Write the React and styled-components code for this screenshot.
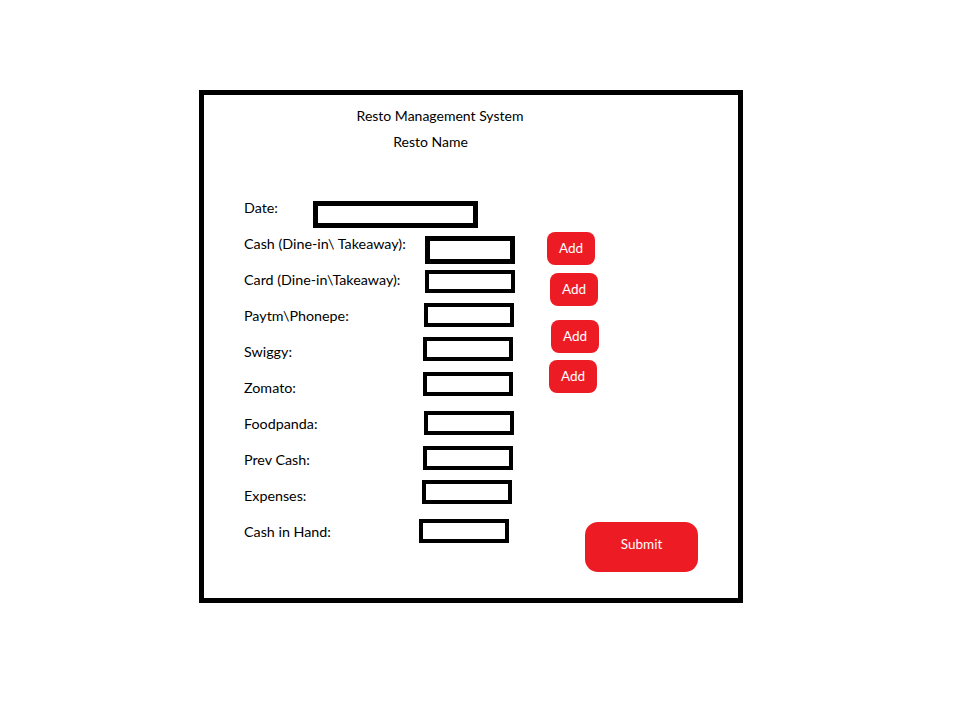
import styled, { createGlobalStyle } from "styled-components";

const GlobalStyle = createGlobalStyle`
  body {
    margin: 0;
    background: #ffffff;
    font-family: Lato, "Liberation Sans", sans-serif;
    color: #000000;
  }
`;

const Page = styled.div`
  padding: 90px 0 0 199px;
`;

const Frame = styled.div`
  box-sizing: border-box;
  width: 544px;
  height: 513px;
  border: 5px solid #000;
  display: flex;
  flex-direction: column;
`;

const Heading = styled.div`
  font-size: 14px;
  line-height: 20px;
  text-align: center;
  margin-top: ${(p) => p.$mt}px;
  padding-right: ${(p) => p.$shift}px;
`;

const Form = styled.div`
  display: flex;
  margin-top: 38px;
`;

const Fields = styled.div`
  width: 303px;
  padding-left: 40px;
  display: flex;
  flex-direction: column;
`;

const Row = styled.div`
  display: grid;
  grid-template-columns: ${(p) => p.$labelW}px auto;
  align-items: start;
  height: 36px;
`;

const Label = styled.span`
  font-size: 14.3px;
  line-height: 36px;
  white-space: nowrap;
`;

const Box = styled.div`
  box-sizing: border-box;
  width: ${(p) => p.$w || 90}px;
  height: ${(p) => p.$h}px;
  margin-top: ${(p) => p.$mt}px;
  border: ${(p) => p.$bw || 4}px solid #000;
  background: #fff;
`;

const Actions = styled.div`
  display: flex;
  flex-direction: column;
  align-items: flex-start;
`;

const RedButton = styled.button`
  box-sizing: border-box;
  width: ${(p) => (p.$big ? 113 : 48)}px;
  height: ${(p) => (p.$big ? 50 : 33)}px;
  margin-top: ${(p) => p.$mt}px;
  margin-left: ${(p) => p.$dx || 0}px;
  border: none;
  border-radius: ${(p) => (p.$big ? 13 : 8)}px;
  background: #ed1c24;
  color: #ffffff;
  font-family: Lato, "Liberation Sans", sans-serif;
  font-size: 13.5px;
  padding: 0 0 ${(p) => (p.$big ? 6 : 2)}px;
  cursor: pointer;
`;

const rows = [
  { label: "Date:", x: 313, top: 11, h: 27, w: 165, bw: 5 },
  { label: "Cash (Dine-in\\ Takeaway):", x: 425, top: 10, h: 28, bw: 5 },
  { label: "Card (Dine-in\\Takeaway):", x: 425, top: 8, h: 23 },
  { label: "Paytm\\Phonepe:", x: 424, top: 5, h: 24 },
  { label: "Swiggy:", x: 423, top: 3, h: 24 },
  { label: "Zomato:", x: 423, top: 2, h: 24 },
  { label: "Foodpanda:", x: 424, top: 5, h: 24 },
  { label: "Prev Cash:", x: 423, top: 4, h: 24 },
  { label: "Expenses:", x: 422, top: 2, h: 24 },
  { label: "Cash in Hand:", x: 419, top: 5, h: 24 },
];

const adds = [
  { mt: 42, dx: 0 },
  { mt: 8, dx: 3 },
  { mt: 14, dx: 4 },
  { mt: 7, dx: 2 },
];

export default function App() {
  return (
    <Page>
      <GlobalStyle />
      <Frame>
        <Heading $mt={11} $shift={62}>
          Resto Management System
        </Heading>
        <Heading $mt={6} $shift={81}>
          Resto Name
        </Heading>
        <Form>
          <Fields>
            {rows.map((r) => (
              <Row key={r.label} $labelW={r.x - 244}>
                <Label>{r.label}</Label>
                <Box $w={r.w} $h={r.h} $mt={r.top} $bw={r.bw} />
              </Row>
            ))}
          </Fields>
          <Actions>
            {adds.map((a, i) => (
              <RedButton key={i} $mt={a.mt} $dx={a.dx}>
                Add
              </RedButton>
            ))}
            <RedButton $big $mt={129} $dx={38}>
              Submit
            </RedButton>
          </Actions>
        </Form>
      </Frame>
    </Page>
  );
}
